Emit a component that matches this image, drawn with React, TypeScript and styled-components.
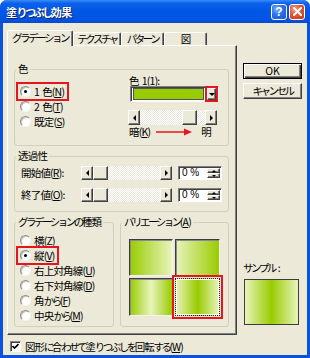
import React from "react";
import styled, { createGlobalStyle, css } from "styled-components";

const FACE = "#ece9d8";
const GREEN = "#99cc00";
const PALE = "#e8f3bc";
const MARK = "#e8141e";

const GlobalStyle = createGlobalStyle`
  html, body {
    margin: 0;
    padding: 0;
    background: #ffffff;
  }
  body {
    font-family: "Noto Sans CJK JP", "Noto Sans", sans-serif;
    font-size: 10.5px;
    line-height: 12px;
    letter-spacing: -0.8px;
    color: #000;
  }
  * {
    box-sizing: border-box;
  }
`;

// kana in the old UI font are much narrower than kanji
const Kana = styled.span`
  letter-spacing: -2.5px;
`;

const KANA_RUN = /([\u3040-\u30ff]+)/;

const Jp = ({ text }: { text: string }) => (
  <>
    {text.split(KANA_RUN).map((part, i) =>
      i % 2 === 1 ? <Kana key={i}>{part}</Kana> : part
    )}
  </>
);

const raised = css`
  background: ${FACE};
  border: 1px solid;
  border-color: #ffffff #404040 #404040 #ffffff;
  box-shadow: inset -1px -1px #808080;
`;

const sunken = css`
  border: 1px solid;
  border-color: #808080 #ffffff #ffffff #808080;
  box-shadow: inset 1px 1px #404040;
`;

const Window = styled.div`
  width: 310px;
  height: 358px;
  display: flex;
  flex-direction: column;
  background: #0a53e0;
  border-radius: 7px 7px 0 0;
  overflow: hidden;
`;

const TitleBar = styled.div`
  height: 23px;
  flex: none;
  display: flex;
  align-items: center;
  gap: 2px;
  padding: 0 5px 0 6px;
  background: linear-gradient(
    to bottom,
    #3b8cf5 0%,
    #0b61ec 14%,
    #0256e6 50%,
    #0054e3 86%,
    #0a49cc 100%
  );
`;

const Title = styled.div`
  flex: 1;
  color: #fff;
  font-weight: bold;
  font-size: 11px;
  letter-spacing: -0.4px;
  text-shadow: 1px 1px #0a1e6a;
`;

const CaptionButton = styled.div<{ $kind: "help" | "close" }>`
  width: 16px;
  height: 16px;
  border: 1px solid #fff;
  border-radius: 3px;
  display: flex;
  align-items: center;
  justify-content: center;
  color: #fff;
  font-family: "Liberation Sans", sans-serif;
  font-weight: bold;
  font-size: 12px;
  letter-spacing: 0;
  background: ${(p) =>
    p.$kind === "close"
      ? "radial-gradient(circle at 35% 30%, #f3a08a 0%, #e2562f 45%, #c4361a 100%)"
      : "radial-gradient(circle at 35% 30%, #7fb2fb 0%, #2c70ee 45%, #1a52d6 100%)"};
`;

const Client = styled.div`
  flex: 1;
  margin: 0 3px 3px;
  background: ${FACE};
  display: grid;
  grid-template-columns: 230px 59px;
  grid-template-rows: 305px 1fr;
  column-gap: 6px;
  padding: 7px 5px 0 4px;
`;

const TabArea = styled.div`
  display: flex;
  flex-direction: column;
`;

const TabStrip = styled.div`
  height: 15px;
  display: flex;
  align-items: flex-end;
  position: relative;
  z-index: 1;
`;

const Tab = styled.div<{ $w: number; $active?: boolean }>`
  width: ${(p) => p.$w}px;
  height: ${(p) => (p.$active ? 16 : 13)}px;
  margin-bottom: ${(p) => (p.$active ? -1 : 0)}px;
  background: ${FACE};
  border: 1px solid;
  border-bottom: none;
  border-color: #ffffff #404040 transparent #ffffff;
  border-radius: 2px 2px 0 0;
  box-shadow: inset -1px 0 #808080;
  display: flex;
  align-items: ${(p) => (p.$active ? "flex-start" : "center")};
  padding-top: ${(p) => (p.$active ? 1 : 0)}px;
  justify-content: center;
  white-space: nowrap;
  overflow: hidden;
`;

const Panel = styled.div`
  height: 290px;
  ${raised};
  display: flex;
  flex-direction: column;
  gap: 4px;
  padding: 17px 7px 0 6px;
`;

const Group = styled.fieldset<{ $h: number; $w?: number }>`
  margin: 0;
  padding: 0;
  min-width: 0;
  height: ${(p) => p.$h}px;
  width: ${(p) => (p.$w ? `${p.$w}px` : "auto")};
  border: 1px solid #d0d0bf;
  border-radius: 3px;
`;

const Legend = styled.legend`
  padding: 0 2px;
  margin-left: 1px;
  line-height: 12px;
  white-space: nowrap;
`;

const ColorBody = styled.div`
  display: flex;
`;

const OptionList = styled.div<{ $top: number; $w?: number }>`
  display: flex;
  flex-direction: column;
  padding-top: ${(p) => p.$top}px;
  margin-left: 3px;
  width: ${(p) => (p.$w ? `${p.$w}px` : "auto")};
  flex: none;
`;

const Option = styled.div<{ $marked?: boolean }>`
  height: 15px;
  display: flex;
  align-items: center;
  gap: 3px;
  padding: 0 3px 0 2px;
  align-self: flex-start;
  white-space: pre;
  ${(p) =>
    p.$marked &&
    css`
      outline: 2px solid ${MARK};
    `}
`;

const Radio = styled.span<{ $on?: boolean }>`
  width: 11px;
  height: 11px;
  flex: none;
  border-radius: 50%;
  background: #fff;
  border: 1px solid;
  border-color: #8d8d8d #f4f4f0 #f4f4f0 #8d8d8d;
  box-shadow: inset 1px 1px #c8c5b8;
  display: flex;
  align-items: center;
  justify-content: center;
  &::after {
    content: "";
    width: 3px;
    height: 3px;
    border-radius: 50%;
    background: ${(p) => (p.$on ? "#000" : "transparent")};
  }
`;

const ColorPick = styled.div`
  display: flex;
  flex-direction: column;
  width: 90px;
`;

const FieldLabel = styled.div`
  height: 11px;
  line-height: 11px;
  padding-left: 1px;
  white-space: pre;
`;

const Combo = styled.div`
  margin: 0 0 8px 2px;
  height: 16px;
  width: 89px;
  background: #fff;
  ${sunken};
  display: flex;
  align-items: center;
  gap: 3px;
  padding: 1px 2px 1px 2px;
`;

const Swatch = styled.div<{ $c: string }>`
  flex: 1;
  height: 12px;
  background: ${(p) => p.$c};
  border: 1px solid #555;
`;

const DropButton = styled.div`
  width: 9px;
  height: 12px;
  ${raised};
  display: flex;
  align-items: center;
  justify-content: center;
  outline: 2px solid ${MARK};
  outline-offset: 0;
`;

const Tri = styled.span<{ $dir: "left" | "right" | "up" | "down"; $s?: number }>`
  width: 0;
  height: 0;
  border: ${(p) => p.$s ?? 3}px solid transparent;
  ${(p) => {
    const s = p.$s ?? 3;
    switch (p.$dir) {
      case "left":
        return css`
          border-left-width: 0;
          border-right: ${s}px solid #000;
        `;
      case "right":
        return css`
          border-right-width: 0;
          border-left: ${s}px solid #000;
        `;
      case "up":
        return css`
          border-top-width: 0;
          border-bottom: ${s}px solid #000;
        `;
      default:
        return css`
          border-bottom-width: 0;
          border-top: ${s}px solid #000;
        `;
    }
  }}
`;

const Scroll = styled.div<{ $w: number; $h: number }>`
  width: ${(p) => p.$w}px;
  height: ${(p) => p.$h}px;
  flex: none;
  display: flex;
  background: repeating-conic-gradient(#ffffff 0 25%, #e9e7dc 0 50%) 0 0 / 2px 2px;
`;

const ScrollButton = styled.div`
  width: 12px;
  flex: none;
  ${raised};
  display: flex;
  align-items: center;
  justify-content: center;
`;

const Track = styled.div<{ $offset: number }>`
  flex: 1;
  display: flex;
  padding-left: ${(p) => p.$offset}px;
`;

const Thumb = styled.div`
  width: 15px;
  ${raised};
`;

const ShadeRow = styled.div`
  display: flex;
  align-items: center;
  height: 12px;
  margin-top: 1px;
  padding-left: 1px;
  white-space: nowrap;
`;

const ShadeArrow = styled.svg`
  margin: 0 9px 0 6px;
  flex: none;
`;

const TransparencyBody = styled.div`
  display: flex;
  flex-direction: column;
  gap: 8px;
  padding: 4px 0 0 6px;
`;

const SliderRow = styled.div`
  display: flex;
  align-items: center;
  height: 14px;
`;

const SliderLabel = styled.div`
  width: 60px;
  white-space: nowrap;
`;

const Edit = styled.div`
  margin-left: 6px;
  width: 44px;
  height: 14px;
  background: #fff;
  ${sunken};
  display: flex;
  align-items: center;
  padding: 1px 1px 1px 3px;
  font-family: "Liberation Sans", sans-serif;
  font-size: 10px;
  letter-spacing: 0;
`;

const EditText = styled.span`
  flex: 1;
  white-space: pre;
`;

const Spinner = styled.div`
  width: 13px;
  height: 100%;
  display: flex;
  flex-direction: column;
`;

const SpinButton = styled.div`
  flex: 1;
  ${raised};
  display: flex;
  align-items: center;
  justify-content: center;
`;

const BottomGroups = styled.div`
  display: flex;
  gap: 6px;
`;

const Variations = styled.div`
  display: grid;
  grid-template-columns: 44px 45px;
  grid-template-rows: 37px 38px;
  gap: 2px;
  padding: 11px 0 0 8px;
`;

const Tile = styled.div<{ $fill: string; $selected?: boolean }>`
  background: ${(p) => p.$fill};
  border: 1px solid;
  border-color: #3c3c3c #f4f3ee #f4f3ee #3c3c3c;
  box-shadow: inset 1px 1px #8a8a8a;
  ${(p) =>
    p.$selected &&
    css`
      border: 1px dotted #222;
      box-shadow: inset 0 0 0 1px #ffffff;
      outline: 2px solid ${MARK};
      outline-offset: 1px;
    `}
`;

const Side = styled.div`
  display: flex;
  flex-direction: column;
  padding: 33px 0 10px;
`;

const Button = styled.div<{ $default?: boolean }>`
  height: 16px;
  ${raised};
  display: flex;
  align-items: center;
  justify-content: center;
  margin-bottom: 4px;
  white-space: nowrap;
  ${(p) =>
    p.$default &&
    css`
      letter-spacing: 0;
      border: 1px solid #000;
      box-shadow: inset 1px 1px #ffffff, inset -1px -1px #404040, inset -2px -2px #808080;
    `}
`;

const SampleLabel = styled.div`
  margin-top: auto;
  height: 12px;
  white-space: pre;
`;

const Sample = styled.div<{ $fill: string }>`
  margin: 5px 0 0 1px;
  width: 55px;
  height: 46px;
  border: 1px solid #3c3c3c;
  background: ${(p) => p.$fill};
`;

const Footer = styled.div`
  grid-column: 1 / -1;
  display: flex;
  align-items: center;
  gap: 4px;
  padding: 3px 0 0 3px;
  white-space: nowrap;
  letter-spacing: -1.1px;
`;

const Check = styled.span`
  width: 11px;
  height: 11px;
  flex: none;
  background: #fff;
  ${sunken};
  display: flex;
  align-items: center;
  justify-content: center;
`;

const grad = {
  darkToLight: `linear-gradient(to right, ${GREEN}, ${PALE})`,
  lightToDark: `linear-gradient(to right, ${PALE}, ${GREEN})`,
  edges: `linear-gradient(to right, ${GREEN}, ${PALE} 50%, ${GREEN})`,
  center: `linear-gradient(to right, ${PALE}, ${GREEN} 50%, ${PALE})`,
};

type ScrollBarProps = { w: number; h: number; offset: number };

const ScrollBar = ({ w, h, offset }: ScrollBarProps) => (
  <Scroll $w={w} $h={h}>
    <ScrollButton>
      <Tri $dir="left" />
    </ScrollButton>
    <Track $offset={offset}>
      <Thumb />
    </Track>
    <ScrollButton>
      <Tri $dir="right" />
    </ScrollButton>
  </Scroll>
);

const PercentBox = () => (
  <Edit>
    <EditText>0 %</EditText>
    <Spinner>
      <SpinButton>
        <Tri $dir="up" $s={2} />
      </SpinButton>
      <SpinButton>
        <Tri $dir="down" $s={2} />
      </SpinButton>
    </Spinner>
  </Edit>
);

const gradientTypes: { label: string; key: string; on?: boolean }[] = [
  { label: "横", key: "Z" },
  { label: "縦", key: "V", on: true },
  { label: "右上対角線", key: "U" },
  { label: "右下対角線", key: "D" },
  { label: "角から", key: "F" },
  { label: "中央から", key: "M" },
];

export default function App() {
  return (
    <>
      <GlobalStyle />
      <Window>
        <TitleBar>
          <Title>
            <Jp text="塗りつぶし効果" />
          </Title>
          <CaptionButton $kind="help">?</CaptionButton>
          <CaptionButton $kind="close">
            <svg width="9" height="9" viewBox="0 0 9 9">
              <path d="M1 1 L8 8 M8 1 L1 8" stroke="#fff" strokeWidth="2" strokeLinecap="square" />
            </svg>
          </CaptionButton>
        </TitleBar>

        <Client>
          <TabArea>
            <TabStrip>
              <Tab $w={66} $active>
                <Jp text="グラデーション" />
              </Tab>
              <Tab $w={48}>
                <Jp text="テクスチャ" />
              </Tab>
              <Tab $w={43}>
                <Jp text="パターン" />
              </Tab>
              <Tab $w={43}>図</Tab>
            </TabStrip>
            <Panel>
              <Group $h={83}>
                <Legend>色</Legend>
                <ColorBody>
                  <OptionList $top={9} $w={110}>
                    <Option $marked>
                      <Radio $on />
                      <span>
                        {"1  色("}
                        <u>N</u>)
                      </span>
                    </Option>
                    <Option>
                      <Radio />
                      <span>
                        {"2  色("}
                        <u>T</u>)
                      </span>
                    </Option>
                    <Option>
                      <Radio />
                      <span>
                        既定(<u>S</u>)
                      </span>
                    </Option>
                  </OptionList>
                  <ColorPick>
                    <FieldLabel>
                      {"色  1("}
                      <u>1</u>):
                    </FieldLabel>
                    <Combo>
                      <Swatch $c={GREEN} />
                      <DropButton>
                        <Tri $dir="down" $s={3} />
                      </DropButton>
                    </Combo>
                    <ScrollBar w={89} h={15} offset={42} />
                    <ShadeRow>
                      暗(<u>K</u>)
                      <ShadeArrow width="36" height="8" viewBox="0 0 36 8">
                        <path d="M0 4 H30" stroke={MARK} strokeWidth="1.6" />
                        <path d="M28 0.5 L36 4 L28 7.5 Z" fill={MARK} />
                      </ShadeArrow>
                      明
                    </ShadeRow>
                  </ColorPick>
                </ColorBody>
              </Group>

              <Group $h={62}>
                <Legend>透過性</Legend>
                <TransparencyBody>
                  <SliderRow>
                    <SliderLabel>
                      開始値(<u>R</u>):
                    </SliderLabel>
                    <ScrollBar w={91} h={14} offset={0} />
                    <PercentBox />
                  </SliderRow>
                  <SliderRow>
                    <SliderLabel>
                      終了値(<u>O</u>):
                    </SliderLabel>
                    <ScrollBar w={91} h={14} offset={0} />
                    <PercentBox />
                  </SliderRow>
                </TransparencyBody>
              </Group>

              <BottomGroups>
                <Group $h={111} $w={100}>
                  <Legend>
                    <Jp text="グラデーションの種類" />
                  </Legend>
                  <OptionList $top={5}>
                    {gradientTypes.map((t) => (
                      <Option key={t.key} $marked={t.on}>
                        <Radio $on={t.on} />
                        <span>
                          <Jp text={t.label} />(<u>{t.key}</u>)
                        </span>
                      </Option>
                    ))}
                  </OptionList>
                </Group>
                <Group $h={111} $w={109}>
                  <Legend>
                    <Jp text="バリエーション" />(<u>A</u>)
                  </Legend>
                  <Variations>
                    <Tile $fill={grad.darkToLight} />
                    <Tile $fill={grad.lightToDark} />
                    <Tile $fill={grad.edges} />
                    <Tile $fill={grad.center} $selected />
                  </Variations>
                </Group>
              </BottomGroups>
            </Panel>
          </TabArea>

          <Side>
            <Button $default>OK</Button>
            <Button>
              <Jp text="キャンセル" />
            </Button>
            <SampleLabel>
              <Jp text="サンプル" />
              {"  :"}
            </SampleLabel>
            <Sample $fill={grad.center} />
          </Side>

          <Footer>
            <Check>
              <svg width="7" height="7" viewBox="0 0 7 7">
                <path d="M0.5 3 L2.5 5 L6.5 1" stroke="#000" strokeWidth="1.6" fill="none" />
              </svg>
            </Check>
            <span>
              <Jp text="図形に合わせて塗りつぶしを回転する" />(<u>W</u>)
            </span>
          </Footer>
        </Client>
      </Window>
    </>
  );
}
